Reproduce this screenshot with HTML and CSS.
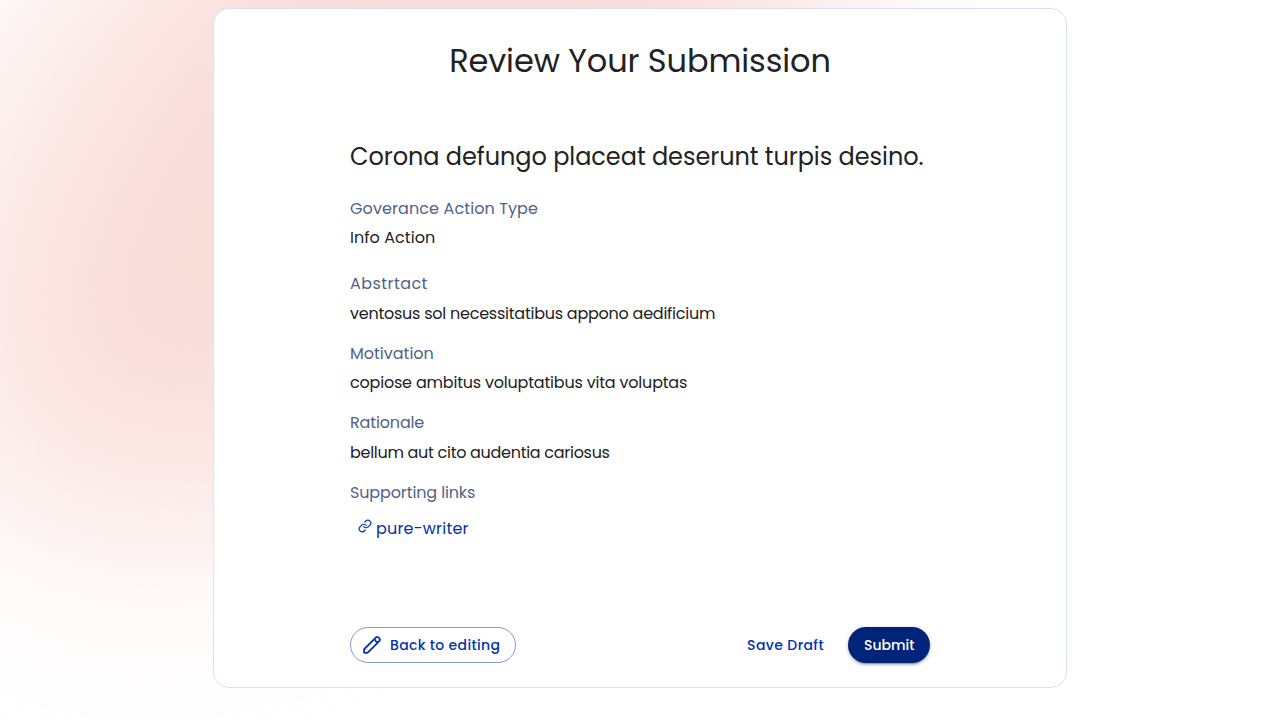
FILE: index.html
```html
<!DOCTYPE html>
<html lang="en">
<head>
<meta charset="utf-8">
<title>Review Your Submission</title>
<link rel="stylesheet" href="styles.css">
</head>
<body>
<div class="glow"></div>
<main class="card">
  <h1 class="title">Review Your Submission</h1>
  <div class="content">
    <h2 class="name">Corona defungo placeat deserunt turpis desino.</h2>
    <dl class="fields">
      <div class="field field-type"><dt class="label">Goverance Action Type</dt><dd class="value">Info Action</dd></div>
      <div class="field field-abstract"><dt class="label">Abstrtact</dt><dd class="value">ventosus sol necessitatibus appono aedificium</dd></div>
      <div class="field field-motivation"><dt class="label">Motivation</dt><dd class="value">copiose ambitus voluptatibus vita voluptas</dd></div>
      <div class="field field-rationale"><dt class="label">Rationale</dt><dd class="value">bellum aut cito audentia cariosus</dd></div>
      <div class="field field-links"><dt class="label">Supporting links</dt>
        <dd class="links"><a class="link" href="#"><svg class="link-icon" viewBox="0 0 24 24" fill="none" stroke="currentColor" stroke-width="2" stroke-linecap="round" stroke-linejoin="round"><path d="M10 13a5 5 0 0 0 7.54.54l3-3a5 5 0 0 0-7.07-7.07l-1.72 1.71"/><path d="M14 11a5 5 0 0 0-7.54-.54l-3 3a5 5 0 0 0 7.07 7.07l1.71-1.71"/></svg><span>pure-writer</span></a></dd>
      </div>
    </dl>
    <div class="actions">
      <button class="btn btn-outline"><svg class="pencil" viewBox="0 0 20 20" fill="none" stroke="currentColor" stroke-width="1.8" stroke-linejoin="round"><path d="M2.7 17.8q-.7 0-.7-.7v-2.2q0-.5.4-.9L14 2.4a1.6 1.6 0 0 1 2.3 0l1.2 1.2a1.6 1.6 0 0 1 0 2.3L6 17.4q-.4.4-.9.4z"/><path d="M13 4.2q.2 2.6 2.9 3"/></svg><span>Back to editing</span></button>
      <div class="actions-end">
        <button class="btn btn-text">Save Draft</button>
        <button class="btn btn-solid">Submit</button>
      </div>
    </div>
  </div>
</main>
</body>
</html>
```
FILE: styles.css
```css
* { box-sizing: border-box; }
body {
  margin: 0;
  height: 720px;
  padding-top: 8px;
  overflow: hidden;
  background: #fff;
  color: #212223;
  font-family: Poppins, Inter, "Open Sans", sans-serif;
}
.glow {
  position: absolute;
  left: -165px;
  top: -215px;
  width: 1150px;
  height: 590px;
  border-radius: 50%;
  background: #f9deda;
  transform: rotate(-43deg);
  filter: blur(103px);
}
.card {
  position: relative;
  width: 854px;
  height: 680px;
  margin: 0 auto;
  padding-top: 28px;
  border: 1px solid #d6e2ff;
  border-radius: 16px;
  background: #fff;
}
.title {
  margin: 0;
  font-size: 32px;
  line-height: 48px;
  font-weight: 400;
  letter-spacing: -.1px;
  text-align: center;
}
.content { width: 580px; margin: 54px auto 0; }
.name {
  margin: 0;
  font-size: 24px;
  line-height: 36px;
  font-weight: 400;
  letter-spacing: -.05px;
  white-space: nowrap;
}
.fields { display: flex; flex-direction: column; gap: 16px; height: 452px; margin: 0; padding-top: 21.6px; }
.label { height: 29.6px; color: #506288; font-size: 16px; line-height: 24px; }
.value { margin: 0; font-size: 16px; line-height: 24px; }
.field-type { padding-bottom: 6px; }
.field-type .label { letter-spacing: .1px; }
.field-type .value { letter-spacing: .05px; }
.field-abstract .label { letter-spacing: .44px; }
.field-abstract .value { letter-spacing: -.245px; }
.field-motivation .value { letter-spacing: -.2px; }
.field-rationale .label { letter-spacing: -.15px; }
.field-rationale .value { letter-spacing: -.29px; }
.field-links .label { letter-spacing: -.13px; }
.links { margin: 0; padding: 6px 8px 0; }
.link { display: flex; gap: 4px; color: #0033ad; font-size: 16px; line-height: 24px; letter-spacing: .2px; text-decoration: none; }
.link-icon { width: 14px; height: 14px; margin-top: 2px; }
.actions { display: flex; justify-content: space-between; }
.actions-end { display: flex; gap: 8px; }
.btn {
  display: flex;
  align-items: center;
  height: 36px;
  padding: 0 16px;
  border: 0;
  border-radius: 18px;
  background: none;
  color: #0033ad;
  font: inherit;
  font-size: 14px;
  font-weight: 500;
  letter-spacing: .4px;
  white-space: nowrap;
}
.btn-outline { gap: 8px; width: 166px; padding: 0 0 0 11px; border: 1px solid #8099d6; letter-spacing: .34px; }
.pencil { width: 20px; height: 20px; }
.btn-solid {
  width: 82px;
  background: #00247a;
  color: #fff;
  letter-spacing: 0;
  box-shadow: 0 3px 1px -2px rgba(0,0,0,.2), 0 2px 2px rgba(0,0,0,.14), 0 1px 5px rgba(0,0,0,.2);
}
```
